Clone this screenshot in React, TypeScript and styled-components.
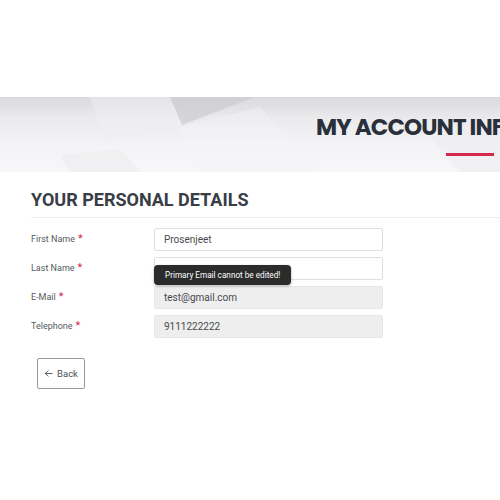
import styled, { createGlobalStyle } from "styled-components";

const GlobalStyle = createGlobalStyle`
  html, body {
    margin: 0;
    padding: 0;
    background: #ffffff;
    overflow-x: hidden;
  }
  body {
    font-family: Roboto, "Liberation Sans", Arial, sans-serif;
  }
`;

const Page = styled.div`
  width: 500px;
  min-height: 500px;
  padding-top: 97px;
  box-sizing: border-box;
  overflow: hidden;
`;

const Banner = styled.div`
  position: relative;
  height: 75px;
  overflow: hidden;
  background: linear-gradient(180deg, #dadadd 0%, #ebebed 30%, #f3f3f5 60%, #f7f7f9 100%);
`;

const BannerArt = styled.svg`
  position: absolute;
  inset: 0;
  width: 100%;
  height: 100%;
`;

const TitleBlock = styled.div`
  position: relative;
  display: flex;
  flex-direction: column;
  padding: 16px 0 0 316px;
`;

const Title = styled.h1`
  margin: 0;
  white-space: nowrap;
  font-family: Poppins, Inter, "Open Sans", sans-serif;
  font-weight: 700;
  font-size: 23px;
  line-height: 28px;
  letter-spacing: -0.9px;
  color: #2a303b;
`;

const TitleBar = styled.div`
  width: 48px;
  height: 3px;
  margin: 12px 0 0 130px;
  background: #d6274f;
`;

const Section = styled.section`
  padding: 16px 0 0 31px;
`;

const SectionTitle = styled.h2`
  margin: 0;
  padding-bottom: 5px;
  border-bottom: 1px solid #ececec;
  font-family: Roboto, "Liberation Sans", sans-serif;
  font-weight: 700;
  font-size: 18px;
  line-height: 24px;
  color: #383d46;
`;

const Form = styled.div`
  display: flex;
  flex-direction: column;
  gap: 6px;
  padding-top: 10px;
`;

const Row = styled.div`
  position: relative;
  display: grid;
  grid-template-columns: 123px 229px;
  align-items: center;
`;

const Label = styled.label`
  font-size: 9px;
  color: #555a60;
  padding-bottom: 2px;
`;

const Star = styled.span`
  color: #d6274f;
  font-size: 11px;
  margin-left: 3px;
`;

const Field = styled.div<{ $readOnly?: boolean }>`
  height: 23px;
  box-sizing: border-box;
  border: 1px solid ${(p) => (p.$readOnly ? "#e6e6e6" : "#dedede")};
  border-radius: 2px;
  background: ${(p) => (p.$readOnly ? "#eeeeee" : "#ffffff")};
  padding: 0 9px;
  display: flex;
  align-items: center;
  font-size: 10px;
  color: #464a4f;
`;

const Tooltip = styled.div`
  position: absolute;
  left: 123px;
  top: 8px;
  height: 20px;
  padding: 0 11px;
  display: flex;
  align-items: center;
  background: #2b2b2c;
  border-radius: 4px;
  box-shadow: 0 1px 3px rgba(0, 0, 0, 0.3);
  color: #ffffff;
  font-size: 8.2px;
  white-space: nowrap;
  z-index: 2;
`;

const BackButton = styled.button`
  margin: 20px 0 0 6px;
  width: 48px;
  height: 31px;
  border: 1px solid #9a9a9a;
  border-radius: 2px;
  background: #ffffff;
  font-family: Roboto, "Liberation Sans", sans-serif;
  font-size: 9.5px;
  color: #4a4e54;
  display: flex;
  align-items: center;
  justify-content: center;
  gap: 4px;
  padding: 0;
`;

const fields = [
  { label: "First Name", value: "Prosenjeet" },
  { label: "Last Name", value: "", tooltip: "Primary Email cannot be edited!" },
  { label: "E-Mail", value: "test@gmail.com", readOnly: true },
  { label: "Telephone", value: "9111222222", readOnly: true },
];

export default function App() {
  return (
    <>
      <GlobalStyle />
      <Page>
        <Banner>
          <BannerArt viewBox="0 0 500 75" preserveAspectRatio="none">
            <polygon points="170,0 255,0 182,28" fill="#cdcdd0" opacity="0.75" />
            <polygon points="90,0 170,0 182,28 105,45" fill="#efeff1" opacity="0.5" />
            <polygon points="60,58 120,52 140,75 70,75" fill="#ededef" opacity="0.6" />
            <polygon points="180,30 260,10 320,75 200,75" fill="#f6f6f8" opacity="0.4" />
            <polygon points="430,40 500,25 500,75 460,75" fill="#ebebee" opacity="0.5" />
          </BannerArt>
          <TitleBlock>
            <Title>MY ACCOUNT INFORMATION</Title>
            <TitleBar />
          </TitleBlock>
        </Banner>
        <Section>
          <SectionTitle>YOUR PERSONAL DETAILS</SectionTitle>
          <Form>
            {fields.map((f) => (
              <Row key={f.label}>
                <Label>
                  {f.label}
                  <Star>*</Star>
                </Label>
                <Field $readOnly={f.readOnly}>{f.value}</Field>
                {f.tooltip && <Tooltip>{f.tooltip}</Tooltip>}
              </Row>
            ))}
          </Form>
          <BackButton>
            <svg width="9" height="9" viewBox="0 0 10 10" fill="none" stroke="#4a4e54" strokeWidth="1" strokeLinecap="round" strokeLinejoin="round">
              <path d="M9 5H1.5M4.5 2L1.5 5l3 3" />
            </svg>
            Back
          </BackButton>
        </Section>
      </Page>
    </>
  );
}
